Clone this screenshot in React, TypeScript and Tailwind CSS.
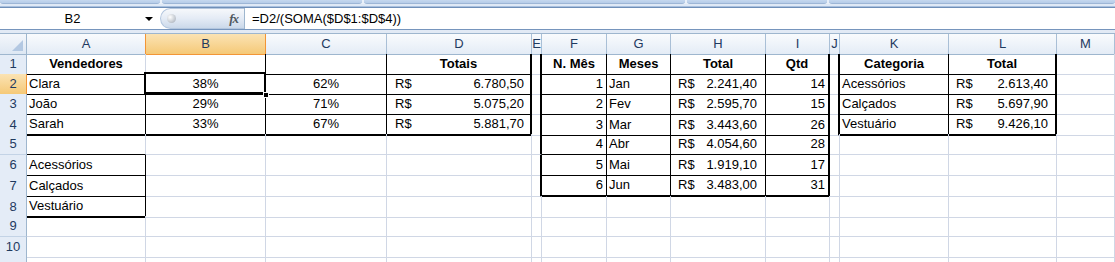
import React from "react";

type Line = "g" | "t" | "k";

interface Cell {
  v?: string;
  acc?: string;
  al?: "l" | "c" | "r";
  b?: boolean;
  r?: Line;
  d?: Line;
  pad?: string;
}

const COLS =
  "grid grid-cols-[27px_119px_120px_121px_145px_10px_65px_64px_95px_64px_10px_109px_108px_1fr]";
const LETTERS = ["A", "B", "C", "D", "E", "F", "G", "H", "I", "J", "K", "L", "M"];

const RIGHT: Record<Line, string> = {
  g: "border-r border-r-[#d0d7e5]",
  t: "border-r border-r-black",
  k: "border-r-2 border-r-black",
};
const BOTTOM: Record<Line, string> = {
  g: "border-b border-b-[#d0d7e5]",
  t: "border-b border-b-black",
  k: "border-b-2 border-b-black",
};

const ALIGN = { l: "justify-start pl-[2px]", c: "justify-center", r: "justify-end pr-[3px]" };

// one table row for rows 1..10
function row(n: number): Cell[] {
  const cells: Cell[] = LETTERS.map(() => ({}));
  const people = [
    ["Clara", "38%", "62%", "6.780,50"],
    ["João", "29%", "71%", "5.075,20"],
    ["Sarah", "33%", "67%", "5.881,70"],
  ];
  const months = [
    ["1", "Jan", "2.241,40", "14"],
    ["2", "Fev", "2.595,70", "15"],
    ["3", "Mar", "3.443,60", "26"],
    ["4", "Abr", "4.054,60", "28"],
    ["5", "Mai", "1.919,10", "17"],
    ["6", "Jun", "3.483,00", "31"],
  ];
  const cats = [
    ["Acessórios", "2.613,40"],
    ["Calçados", "5.697,90"],
    ["Vestuário", "9.426,10"],
  ];

  // table 1: A1:D4
  if (n === 1) {
    cells[0] = { v: "Vendedores", b: true, al: "c", d: "t" };
    cells[1] = { r: "t", d: "t" };
    cells[2] = { r: "t", d: "t" };
    cells[3] = { v: "Totais", b: true, al: "c", r: "k", d: "t" };
  } else if (n <= 4) {
    const p = people[n - 2];
    const d: Line = n === 4 ? "k" : "t";
    cells[0] = { v: p[0], al: "l", r: "t", d };
    cells[1] = { v: p[1], al: "c", r: "t", d };
    cells[2] = { v: p[2], al: "c", r: "t", d };
    cells[3] = { acc: p[3], r: "k", d, pad: "pl-[8px] pr-[6px]" };
  }

  // list A6:A8
  if (n === 5) cells[0] = { d: "t" };
  if (n >= 6 && n <= 8) cells[0] = { v: cats[n - 6][0], al: "l", r: "t", d: n === 8 ? "k" : "t" };

  // table 3: F1:I7
  if (n <= 7) {
    cells[4] = { r: "k" };
    if (n === 1) {
      cells[5] = { v: "N. Mês", b: true, al: "c", r: "t", d: "t" };
      cells[6] = { v: "Meses", b: true, al: "c", r: "t", d: "t" };
      cells[7] = { v: "Total", b: true, al: "c", r: "t", d: "t" };
      cells[8] = { v: "Qtd", b: true, al: "c", r: "k", d: "t" };
    } else {
      const m = months[n - 2];
      const d: Line = n === 7 ? "k" : "t";
      cells[5] = { v: m[0], al: "r", r: "t", d };
      cells[6] = { v: m[1], al: "l", r: "t", d };
      cells[7] = { acc: m[2], r: "t", d, pad: "pl-[7px] pr-[8px]" };
      cells[8] = { v: m[3], al: "r", r: "k", d, pad: "pr-[1px]" };
    }
  }

  // table 4: K1:L4
  if (n <= 4) {
    cells[9] = { r: "k" };
    if (n === 1) {
      cells[10] = { v: "Categoria", b: true, al: "c", r: "t", d: "t" };
      cells[11] = { v: "Total", b: true, al: "c", r: "k", d: "t" };
    } else {
      const c = cats[n - 2];
      const d: Line = n === 4 ? "k" : "t";
      cells[10] = { v: c[0], al: "l", r: "t", d };
      cells[11] = { acc: c[1], r: "k", d, pad: "pl-[7px] pr-[7px]" };
    }
  }
  return cells;
}

const HEIGHTS = ["h-[20px]", "h-[20px]", "h-[20px]", "h-[20px]", "h-[21px]", "h-[20px]", "h-[21px]", "h-[20px]", "h-[21px]", "h-[20px]"];

function CellView({ c, sel }: { c: Cell; sel?: boolean }) {
  const cls = [
    "flex items-center whitespace-nowrap overflow-visible min-w-0",
    RIGHT[c.r ?? "g"],
    BOTTOM[c.d ?? "g"],
    c.b ? "font-bold" : "",
    sel ? "relative" : "",
  ].join(" ");
  if (c.acc) {
    return (
      <div className={`${cls} justify-between ${c.pad ?? ""}`}>
        <span>R$</span>
        <span>{c.acc}</span>
      </div>
    );
  }
  return (
    <div className={`${cls} ${ALIGN[c.al ?? "l"]} ${c.pad ?? ""}`}>
      {c.v}
      {sel && (
        <>
          <div className="absolute -left-[2px] -top-[2px] w-[122px] h-[22px] border-2 border-black shadow-[inset_0_0_0_1px_white] pointer-events-none" />
          <div className="absolute -right-[4px] -bottom-[4px] w-[6px] h-[6px] bg-black border border-white" />
        </>
      )}
    </div>
  );
}

function RibbonEdge() {
  const groups = ["w-[160px]", "w-[200px]", "w-[321px]", "w-[140px]", "flex-1"];
  return (
    <div className="h-[8px] bg-[#dbe7f5]">
      <div className="flex h-[4px] gap-[2px] bg-[#e9f0f9]">
        {groups.map((g, i) => (
          <div key={i} className={`${g} h-[4px] rounded-b-[3px] bg-gradient-to-b from-[#c5d8ef] to-[#b6cce8] border-b border-[#9db6d6]`} />
        ))}
      </div>
      <div className="h-[2px] bg-[#dfe9f6]" />
      <div className="h-[1px] bg-[#a9c0de]" />
      <div className="h-[1px] bg-[#6f8fb8]" />
    </div>
  );
}

function FormulaBar() {
  return (
    <div className="flex h-[22px] bg-white border-b border-[#7695bd]">
      <div className="w-[145px] flex items-center justify-center pt-[1px]">B2</div>
      <div className="w-[15px] flex items-center justify-start pt-[1px]">
        <svg width="8" height="4" viewBox="0 0 8 4">
          <polygon points="0,0 8,0 4,4" fill="#000" />
        </svg>
      </div>
      <div className="w-[84px] h-[21px] flex items-center justify-between pl-[6px] pr-[6px] rounded-l-full border border-r-0 border-[#b3c6de] bg-gradient-to-b from-[#f6f8fb] via-[#e4ebf5] to-[#cbd9ea]">
        <div className="w-[9px] h-[9px] rounded-full bg-[radial-gradient(circle_at_35%_35%,#ffffff,#9ea7b3)]" />
        <span className="font-['Liberation_Serif',serif] italic font-bold text-[13px] text-[#505860] tracking-[-1px]">fx</span>
      </div>
      <div className="w-[1px] bg-[#9eb6ce]" />
      <div className="flex items-center pl-[7px] pt-[1px]">=D2/(SOMA($D$1:$D$4))</div>
    </div>
  );
}

export default function App() {
  return (
    <div className="w-[1115px] h-[262px] overflow-hidden bg-white font-['Liberation_Sans',Arial,sans-serif] text-[13px] text-black">
      <RibbonEdge />
      <FormulaBar />
      <div className="h-[4px] bg-[#e2eaf5] border-b border-[#9eb6ce]" />

      {/* column headers */}
      <div className={`${COLS} h-[20px] text-[#1f3a5f]`}>
        <div className="relative bg-gradient-to-b from-[#f4f7fb] to-[#dde7f3] border-r border-b border-[#9eb6ce]">
          <svg className="absolute right-[3px] bottom-[3px]" width="11" height="11" viewBox="0 0 11 11">
            <polygon points="11,0 11,11 0,11" fill="#b3c8e2" />
          </svg>
        </div>
        {LETTERS.map((l) =>
          l === "B" ? (
            <div key={l} className="flex items-center justify-center bg-gradient-to-b from-[#fbe3b3] to-[#f5c977] border-r border-b border-[#f29536]">
              {l}
            </div>
          ) : (
            <div
              key={l}
              className={`flex items-center justify-center bg-gradient-to-b from-[#f9fbfd] to-[#e4ecf6] border-b border-b-[#9eb6ce] border-r ${l === "A" ? "border-r-[#f29536]" : "border-r-[#a9bfd6]"}`}
            >
              {l}
            </div>
          )
        )}
      </div>

      {HEIGHTS.map((h, i) => {
        const n = i + 1;
        const cells = row(n);
        return (
          <div key={n} className={`${COLS} ${h}`}>
            <div
              className={`flex items-center justify-center text-[#1f3a5f] border-r border-b ${
                n === 2
                  ? "bg-gradient-to-b from-[#fbe3b3] to-[#f5c977] border-[#f29536]"
                  : "bg-[#e4ecf7] border-r-[#9eb6ce] border-b-[#c3d3e6]"
              }`}
            >
              {n}
            </div>
            {cells.map((c, j) => (
              <CellView key={j} c={c} sel={n === 2 && j === 1} />
            ))}
          </div>
        );
      })}

      {/* row 11, only its top few pixels are in view */}
      <div className={`${COLS} h-[20px]`}>
        <div className="bg-[#e4ecf7] border-r border-[#9eb6ce]" />
        {LETTERS.map((l) => (
          <div key={l} className="border-r border-[#d0d7e5]" />
        ))}
      </div>
    </div>
  );
}
